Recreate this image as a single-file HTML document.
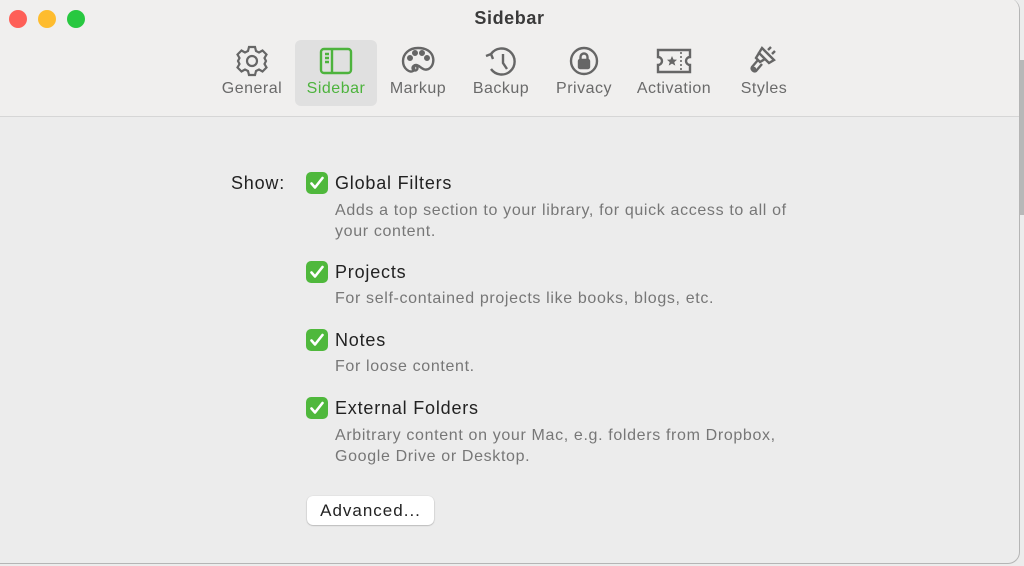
<!DOCTYPE html>
<html><head><meta charset="utf-8"><style>
*{margin:0;padding:0;box-sizing:border-box}
body{width:1024px;height:566px;overflow:hidden;background:#ececec;font-family:"Liberation Sans",sans-serif;position:relative}
.win{position:absolute;left:0;top:-2px;width:1020px;height:566px;background:#ececec;border-radius:0 12px 12px 0;border-right:1px solid #b5b5b5;border-bottom:1px solid #b5b5b5;overflow:hidden}
.top{position:absolute;left:0;top:0;width:100%;height:119px;background:#f0efee;border-bottom:1px solid #d6d6d6}
.dot{position:absolute;top:12px;width:18px;height:18px;border-radius:50%}
.title{position:absolute;top:10px;left:0;width:100%;text-align:center;font-weight:bold;font-size:18px;letter-spacing:0.6px;color:#3a3a3a}
.item{position:absolute;top:42px;width:82px;height:66px;text-align:center;color:#6a6a6a;font-size:16px;letter-spacing:0.5px}
.item svg{display:block;margin:4px auto 0}
.item span{position:absolute;left:-10px;width:102px;top:40px}
.sel{background:#e0e0e0;border-radius:6px;color:#4db33d}
.t{position:absolute;font-size:18px;letter-spacing:0.8px;color:#222}
.d{position:absolute;font-size:16px;letter-spacing:0.65px;color:#777;line-height:20.5px;white-space:nowrap}
.cb{position:absolute;left:306px;width:22px;height:22px;border-radius:5px;background:#4fb83c}
.cb svg{position:absolute;left:3px;top:3px}
.btn{position:absolute;left:307px;top:498px;width:127px;height:29px;background:#fff;border-radius:6px;box-shadow:0 0.5px 1.5px rgba(0,0,0,.35);font-size:17px;letter-spacing:1px;color:#222;text-align:center;line-height:29px}
.side{position:absolute;left:1020px;top:60px;width:4px;height:155px;background:#b8b8b8}
</style></head><body>
<div class="side"></div>
<div class="win">
<div class="top">
<div class="dot" style="left:9px;background:#fe5f57"></div>
<div class="dot" style="left:38px;background:#febc2e"></div>
<div class="dot" style="left:67px;background:#28c840"></div>
<div class="title">Sidebar</div>

<div class="item" style="left:211px"><svg width="34" height="34" viewBox="0 0 34 34" fill="none" stroke="#666" stroke-width="2.2"><circle cx="17" cy="17" r="5"/><path d="M14 3l-1 4-3 1.5-3.5-2-4 4 2 3.5L3 17l1.5 3-2 3.5 4 4 3.5-2 3 1.5 1 4h6l1-4 3-1.5 3.5 2 4-4-2-3.5L31 17l-1.5-3 2-3.5-4-4-3.5 2-3-1.5-1-4z"/></svg><span>General</span></div>

<div class="item sel" style="left:295px"><svg width="36" height="34" viewBox="0 0 36 34" fill="none" stroke="#4db33d" stroke-width="2.4"><rect x="3" y="5" width="30" height="24" rx="3"/><path d="M14 5v24M7 10h4M7 14h4M7 18h4"/></svg><span>Sidebar</span></div>

<div class="item" style="left:377px"><svg width="36" height="34" viewBox="0 0 36 34" fill="none" stroke="#666" stroke-width="2.4"><path d="M18 4C9 4 3 10 3 17c0 8 7 12 10 10s-1-6 3-6 8 8 14 3 5-20-12-20z"/><circle cx="15" cy="24" r="2.5"/><circle cx="10" cy="14" r="1.8" fill="#666"/><circle cx="15" cy="9" r="1.8" fill="#666"/><circle cx="22" cy="9" r="1.8" fill="#666"/><circle cx="27" cy="14" r="1.8" fill="#666"/></svg><span>Markup</span></div>

<div class="item" style="left:460px"><svg width="36" height="34" viewBox="0 0 36 34" fill="none" stroke="#666" stroke-width="2.4"><path d="M8 10A13 13 0 1 1 8 25"/><path d="M20 10v9l4 6"/><path d="M3 12l5 -2 2 5" fill="none"/></svg><span>Backup</span></div>

<div class="item" style="left:543px"><svg width="34" height="34" viewBox="0 0 34 34" fill="none" stroke="#666" stroke-width="2.4"><circle cx="17" cy="17" r="13"/><rect x="12" y="16" width="10" height="8" rx="1" fill="#666"/><path d="M13.5 16v-3a3.5 3.5 0 0 1 7 0v3"/></svg><span>Privacy</span></div>

<div class="item" style="left:633px"><svg width="38" height="34" viewBox="0 0 38 34" fill="none" stroke="#666" stroke-width="2.4"><path d="M3 6h32v7a4 4 0 0 0 0 8v7H3v-7a4 4 0 0 0 0-8z"/><path d="M26 8v18" stroke-dasharray="2 2" stroke-width="1.6"/><path d="M17 12l1.5 3.5 3.5.3-2.7 2.3 1 3.5-3.3-2-3.3 2 1-3.5-2.7-2.3 3.5-.3z" fill="#666" stroke="none"/></svg><span>Activation</span></div>

<div class="item" style="left:723px"><svg width="36" height="34" viewBox="0 0 36 34" fill="none" stroke="#666" stroke-width="2.4"><path d="M16 4l12 12-5 3-10-10z"/><path d="M13 9l-3 5 4 4 5-3"/><path d="M12 16l-6 7a3 3 0 0 0 4 4l6-7"/><circle cx="8" cy="25" r="1"/><path d="M22 6l3-3M26 10l3-3"/></svg><span>Styles</span></div>
</div>

<div class="t" style="left:231px;top:175px">Show:</div>

<div class="cb" style="top:174px"><svg width="16" height="16" viewBox="0 0 16 16"><path d="M2.5 8.5l3.5 4 7.5-9.5" fill="none" stroke="#fff" stroke-width="2.6" stroke-linecap="round" stroke-linejoin="round"/></svg></div>
<div class="t" style="left:335px;top:175px">Global Filters</div>
<div class="d" style="left:335px;top:203px">Adds a top section to your library, for quick access to all of<br>your content.</div>

<div class="cb" style="top:263px"><svg width="16" height="16" viewBox="0 0 16 16"><path d="M2.5 8.5l3.5 4 7.5-9.5" fill="none" stroke="#fff" stroke-width="2.6" stroke-linecap="round" stroke-linejoin="round"/></svg></div>
<div class="t" style="left:335px;top:264px">Projects</div>
<div class="d" style="left:335px;top:291px">For self-contained projects like books, blogs, etc.</div>

<div class="cb" style="top:331px"><svg width="16" height="16" viewBox="0 0 16 16"><path d="M2.5 8.5l3.5 4 7.5-9.5" fill="none" stroke="#fff" stroke-width="2.6" stroke-linecap="round" stroke-linejoin="round"/></svg></div>
<div class="t" style="left:335px;top:332px">Notes</div>
<div class="d" style="left:335px;top:359px">For loose content.</div>

<div class="cb" style="top:399px"><svg width="16" height="16" viewBox="0 0 16 16"><path d="M2.5 8.5l3.5 4 7.5-9.5" fill="none" stroke="#fff" stroke-width="2.6" stroke-linecap="round" stroke-linejoin="round"/></svg></div>
<div class="t" style="left:335px;top:400px">External Folders</div>
<div class="d" style="left:335px;top:428px">Arbitrary content on your Mac, e.g. folders from Dropbox,<br>Google Drive or Desktop.</div>

<div class="btn">Advanced...</div>
</div>
</body></html>
